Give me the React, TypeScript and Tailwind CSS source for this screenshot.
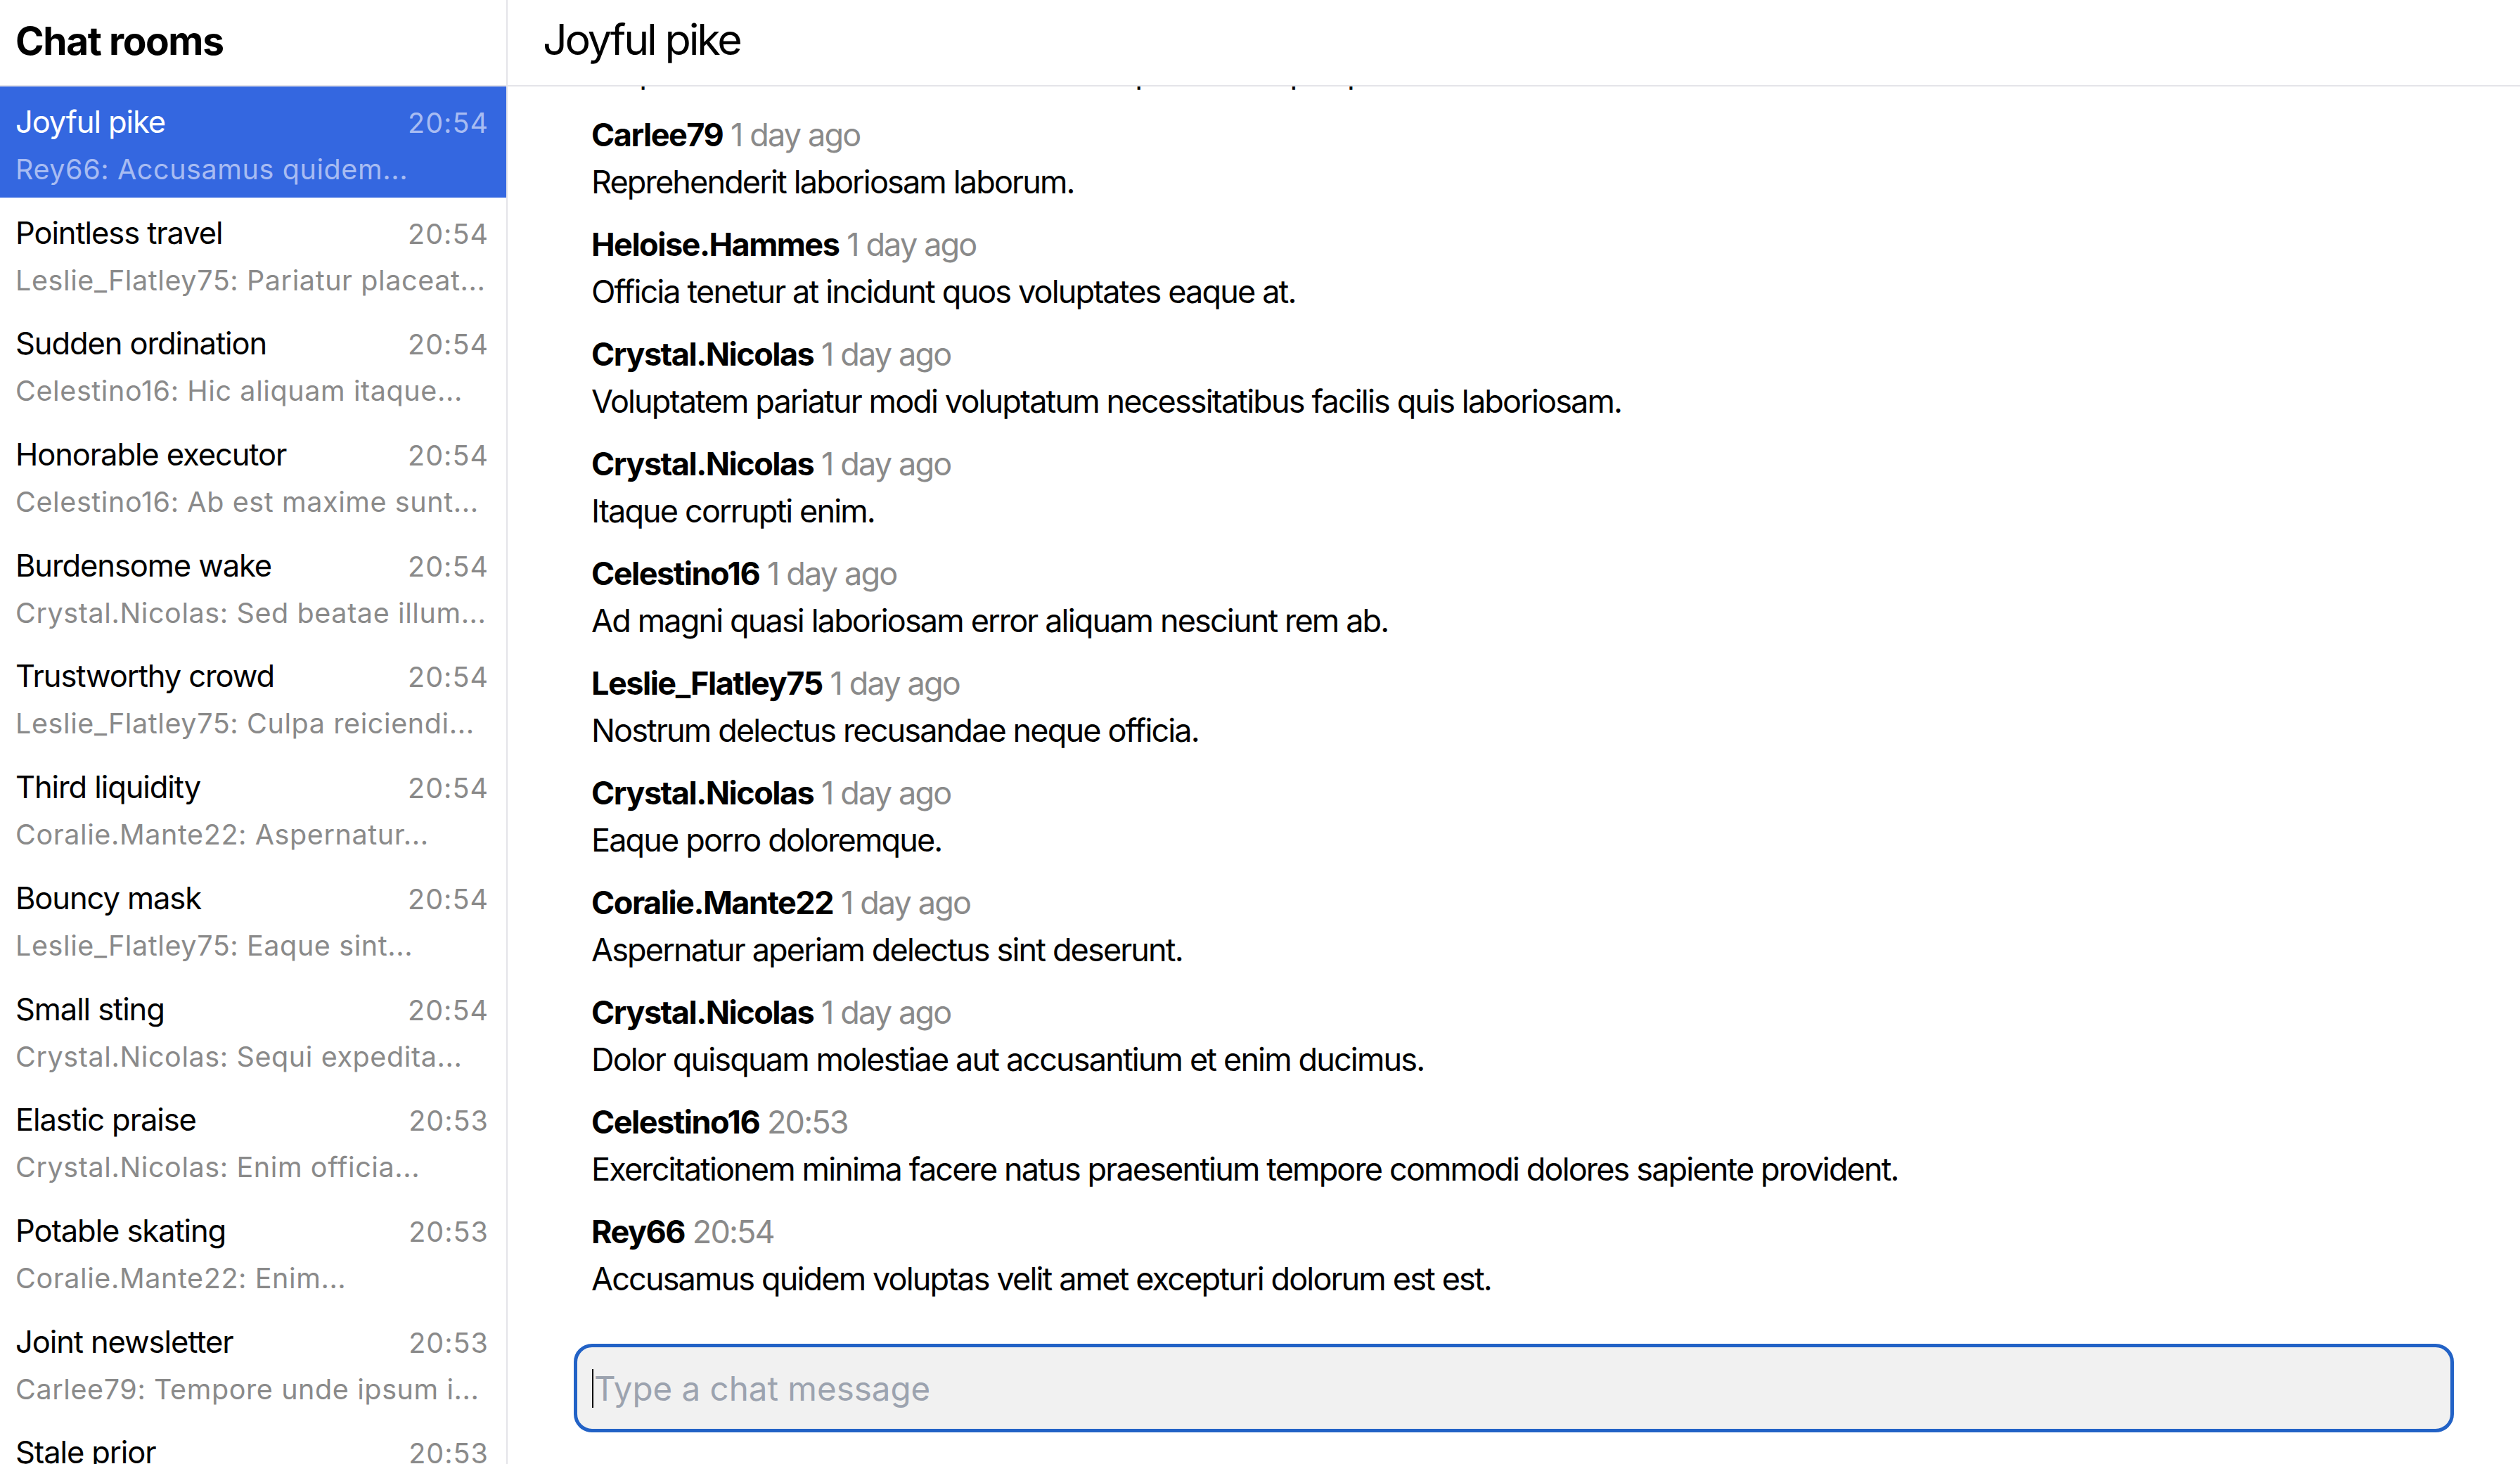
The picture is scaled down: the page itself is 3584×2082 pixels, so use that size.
import React from "react";

type Room = { name: string; time: string; preview: string };
type Msg = { user: string; time: string; text: string };

const rooms: Room[] = [
  { name: "Joyful pike", time: "20:54", preview: "Rey66: Accusamus quidem..." },
  { name: "Pointless travel", time: "20:54", preview: "Leslie_Flatley75: Pariatur placeat..." },
  { name: "Sudden ordination", time: "20:54", preview: "Celestino16: Hic aliquam itaque..." },
  { name: "Honorable executor", time: "20:54", preview: "Celestino16: Ab est maxime sunt..." },
  { name: "Burdensome wake", time: "20:54", preview: "Crystal.Nicolas: Sed beatae illum..." },
  { name: "Trustworthy crowd", time: "20:54", preview: "Leslie_Flatley75: Culpa reiciendi..." },
  { name: "Third liquidity", time: "20:54", preview: "Coralie.Mante22: Aspernatur..." },
  { name: "Bouncy mask", time: "20:54", preview: "Leslie_Flatley75: Eaque sint..." },
  { name: "Small sting", time: "20:54", preview: "Crystal.Nicolas: Sequi expedita..." },
  { name: "Elastic praise", time: "20:53", preview: "Crystal.Nicolas: Enim officia..." },
  { name: "Potable skating", time: "20:53", preview: "Coralie.Mante22: Enim..." },
  { name: "Joint newsletter", time: "20:53", preview: "Carlee79: Tempore unde ipsum i..." },
  { name: "Stale prior", time: "20:53", preview: "Heloise.Hammes: Officia tenetur..." },
];

const messages: Msg[] = [
  { user: "Leslie_Flatley75", time: "1 day ago", text: "Sequi sint molestias ut ratione et amet optio aut et quisquam." },
  { user: "Carlee79", time: "1 day ago", text: "Reprehenderit laboriosam laborum." },
  { user: "Heloise.Hammes", time: "1 day ago", text: "Officia tenetur at incidunt quos voluptates eaque at." },
  { user: "Crystal.Nicolas", time: "1 day ago", text: "Voluptatem pariatur modi voluptatum necessitatibus facilis quis laboriosam." },
  { user: "Crystal.Nicolas", time: "1 day ago", text: "Itaque corrupti enim." },
  { user: "Celestino16", time: "1 day ago", text: "Ad magni quasi laboriosam error aliquam nesciunt rem ab." },
  { user: "Leslie_Flatley75", time: "1 day ago", text: "Nostrum delectus recusandae neque officia." },
  { user: "Crystal.Nicolas", time: "1 day ago", text: "Eaque porro doloremque." },
  { user: "Coralie.Mante22", time: "1 day ago", text: "Aspernatur aperiam delectus sint deserunt." },
  { user: "Crystal.Nicolas", time: "1 day ago", text: "Dolor quisquam molestiae aut accusantium et enim ducimus." },
  { user: "Celestino16", time: "20:53", text: "Exercitationem minima facere natus praesentium tempore commodi dolores sapiente provident." },
  { user: "Rey66", time: "20:54", text: "Accusamus quidem voluptas velit amet excepturi dolorum est est." },
];

function RoomItem({ room, active }: { room: Room; active: boolean }) {
  return (
    <li
      className={
        active
          ? "h-[157.7px] shrink-0 bg-[#3467e0] pl-[22px] pr-[25px] pt-[20px] text-white"
          : "h-[157.7px] shrink-0 pl-[22px] pr-[25px] pt-[20px] text-black"
      }
    >
      <div className="flex items-baseline justify-between">
        <span className="whitespace-nowrap text-[43.5px] leading-[60px] tracking-[-1.1px]">{room.name}</span>
        <span
          className={
            active
              ? "text-[39.5px] leading-[60px] tracking-[1px] text-[#a8bcf2]"
              : "text-[39.5px] leading-[60px] tracking-[1px] text-[#8a8a8a]"
          }
        >
          {room.time}
        </span>
      </div>
      <div
        className={
          active
            ? "mt-[8px] overflow-hidden whitespace-nowrap text-[39.5px] leading-[56px] tracking-[0.6px] text-[#a8bcf2]"
            : "mt-[8px] overflow-hidden whitespace-nowrap text-[39.5px] leading-[56px] tracking-[0.6px] text-[#8a8a8a]"
        }
      >
        {room.preview}
      </div>
    </li>
  );
}

export default function App() {
  return (
    <div className="flex h-[2082px] w-[3584px] overflow-hidden bg-white font-['Inter','Noto_Sans',sans-serif] text-black">
      <aside className="flex w-[722px] shrink-0 flex-col border-r-2 border-[#e4e4e9]">
        <div className="flex h-[123px] shrink-0 items-center border-b-2 border-[#e4e4e9] pb-[5px] pl-[22px]">
          <h1 className="text-[55px] font-bold leading-none tracking-[-1.4px]">Chat rooms</h1>
        </div>
        <ul className="flex min-h-0 flex-1 flex-col overflow-hidden">
          {rooms.map((r, i) => (
            <RoomItem key={r.name} room={r} active={i === 0} />
          ))}
        </ul>
      </aside>

      <main className="flex min-w-0 flex-1 flex-col">
        <div className="relative z-10 flex h-[123px] shrink-0 items-center border-b-2 border-[#e4e4e9] bg-white pb-[9px] pl-[50px]">
          <h2 className="text-[61px] font-normal leading-none tracking-[-3.2px]">Joyful pike</h2>
        </div>

        <div className="flex min-h-0 flex-1 flex-col justify-end gap-[22px] overflow-hidden pl-[119px] pr-[94px]">
          {messages.map((m, i) => (
            <div key={i} className="shrink-0 text-[45px] leading-[67px] tracking-[-1.85px]">
              <div className="whitespace-nowrap">
                <span className="font-bold tracking-[-1.5px]">{m.user}</span>{" "}
                <span className="text-[#8a8a8a]">{m.time}</span>
              </div>
              <p className="whitespace-nowrap">{m.text}</p>
            </div>
          ))}
        </div>

        <div className="shrink-0 px-[94px] pb-[45px] pt-[59px]">
          <div className="relative">
            <input
              type="text"
              placeholder="Type a chat message"
              className="h-[126px] w-full rounded-[26px] border-[5px] border-[#2262c6] bg-[#f1f1f1] pl-[24px] text-[47.5px] text-black outline-none placeholder:text-[#9ca3af]"
            />
            <span className="pointer-events-none absolute left-[26px] top-[36px] h-[55px] w-[2px] bg-black" />
          </div>
        </div>
      </main>
    </div>
  );
}
